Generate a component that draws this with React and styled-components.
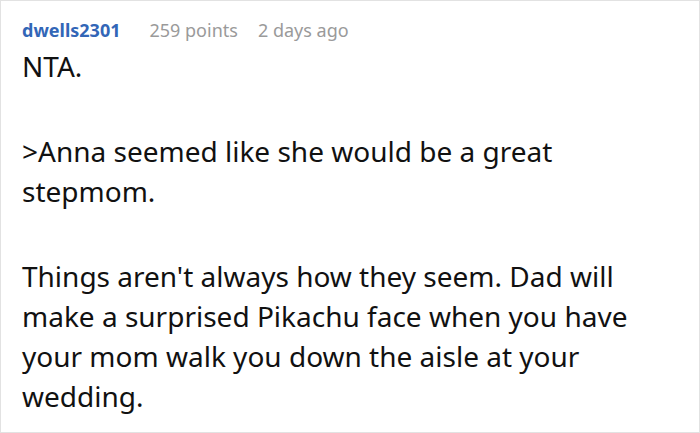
import React from 'react';
import styled, { createGlobalStyle } from 'styled-components';

const GlobalStyle = createGlobalStyle`
    html, body {
        margin: 0;
        padding: 0;
        background: #ffffff;
    }
`;

const Card = styled.div`
    box-sizing: border-box;
    width: 700px;
    height: 433px;
    border: 1px solid #e2e2e2;
    padding: 17px 22px 0 21px;
    overflow: hidden;
    font-family: "Noto Sans", "Open Sans", sans-serif;
    background: #ffffff;
`;

const Meta = styled.div`
    display: flex;
    align-items: baseline;
    gap: 20px;
    font-size: 18px;
    line-height: 24px;
`;

const Author = styled.span`
    color: #3266b7;
    font-weight: 700;
    margin-right: 9px;
`;

const Info = styled.span`
    color: #9a9a9a;
`;

const Body = styled.div`
    margin-top: 4px;
    color: #111111;
    font-size: 28px;
    line-height: 40px;
`;

const Paragraph = styled.p`
    margin: 0 0 45px;
`;

const paragraphs = [
    'NTA.',
    '>Anna seemed like she would be a great stepmom.',
    "Things aren't always how they seem. Dad will make a surprised Pikachu face when you have your mom walk you down the aisle at your wedding.",
];

const App = () => (
    <>
        <GlobalStyle />
        <Card>
            <Meta>
                <Author>dwells2301</Author>
                <Info>259 points</Info>
                <Info>2 days ago</Info>
            </Meta>
            <Body>
                {paragraphs.map(text => (
                    <Paragraph key={text}>{text}</Paragraph>
                ))}
            </Body>
        </Card>
    </>
);

export default App;
